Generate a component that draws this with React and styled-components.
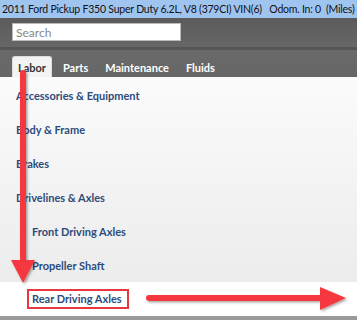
import React from 'react'
import styled, { createGlobalStyle } from 'styled-components'

const Global = createGlobalStyle`
    html, body {
        margin: 0;
        padding: 0;
        background: #ffffff;
    }
    body {
        font-family: Lato, "Open Sans", sans-serif;
    }
`

const StWrap = styled.div`
    position: relative;
    width: 357px;
    height: 320px;
    overflow: hidden;
    display: flex;
    flex-direction: column;
`

const StTitle = styled.div`
    height: 18px;
    background: #a0c4f0;
    color: #111;
    font-size: 10.5px;
    letter-spacing: -0.22px;
    line-height: 18px;
    padding-left: 2px;
    white-space: pre;
`

const StSearchBar = styled.div`
    height: 29px;
    background: linear-gradient(#5b5b5b, #676767);
    display: flex;
    align-items: center;
    padding-left: 12px;
    border-bottom: 3px solid #555;
`

const StSearch = styled.input`
    width: 164px;
    height: 16px;
    border: 1px solid #bbb;
    padding: 0 0 0 3px;
    font-family: Lato, sans-serif;
    font-size: 12px;
    color: #777;
    outline: none;
    &::placeholder { color: #888; }
`

const StTabs = styled.div`
    height: 28px;
    background: linear-gradient(#6a6a6a, #666);
    display: flex;
    align-items: flex-end;
    padding-left: 12px;
    gap: 5px;
`

const STab = styled.div`
    height: 20px;
    padding: 0 5px;
    font-size: 11px;
    font-weight: 700;
    line-height: 21px;
    color: ${p => (p.active ? '#333' : '#fff')};
    background: ${p => (p.active ? '#f3f3f3' : 'transparent')};
    border: 1px solid ${p => (p.active ? '#ddd' : 'transparent')};
    border-bottom: none;
    border-radius: 3px 3px 0 0;
`

const StList = styled.div`
    height: 204px;
    background: linear-gradient(#fbfbfb, #ececec);
    display: flex;
    flex-direction: column;
    padding-top: 1px;
`

const StItem = styled.div`
    height: 34px;
    display: flex;
    align-items: center;
    padding-left: ${p => (p.sub ? 32 : 16)}px;
    font-size: 11px;
    font-weight: 700;
    color: #2d4c7c;
`

const StSelected = styled.div`
    height: 34px;
    background: #fff;
    display: flex;
    align-items: center;
    padding-left: 27px;
    border-bottom: 4px solid #9a9a9a;
`

const StBox = styled.div`
    border: 2px solid #e8383d;
    padding: 1px 5px 2px 3px;
    font-size: 11px;
    font-weight: 700;
    color: #2d4c7c;
`

const StArrows = styled.svg`
    position: absolute;
    left: 0;
    top: 0;
    pointer-events: none;
`

const tabs = ['Labor', 'Parts', 'Maintenance', 'Fluids']

const items = [
    { name: 'Accessories & Equipment' },
    { name: 'Body & Frame' },
    { name: 'Brakes' },
    { name: 'Drivelines & Axles' },
    { name: 'Front Driving Axles', sub: true },
    { name: 'Propeller Shaft', sub: true },
]

const App = () => {
    return (
        <StWrap>
            <Global />
            <StTitle>2011 Ford Pickup F350 Super Duty 6.2L, V8 (379CI) VIN(6)   Odom. In: 0  (Miles)</StTitle>
            <StSearchBar>
                <StSearch placeholder="Search" />
            </StSearchBar>
            <StTabs>
                {tabs.map((t, i) => (
                    <STab key={t} active={i === 0}>{t}</STab>
                ))}
            </StTabs>
            <StList>
                {items.map(item => (
                    <StItem key={item.name} sub={item.sub}>{item.name}</StItem>
                ))}
            </StList>
            <StSelected>
                <StBox>Rear Driving Axles</StBox>
            </StSelected>

            <StArrows width="357" height="320" viewBox="0 0 357 320">
                <defs>
                    <filter id="sh" x="-20%" y="-20%" width="140%" height="140%">
                        <feDropShadow dx="1.5" dy="1.5" stdDeviation="1.2" floodColor="#000" floodOpacity="0.35" />
                    </filter>
                </defs>
                <g fill="#f5393f" filter="url(#sh)">
                    <rect x="20" y="70" width="6" height="192" rx="3" />
                    <polygon points="11,260 35,260 23,283" />
                    <rect x="146" y="295" width="180" height="6" rx="3" />
                    <polygon points="320,287 346,298 320,310" />
                </g>
            </StArrows>
        </StWrap>
    )
}
export default App
